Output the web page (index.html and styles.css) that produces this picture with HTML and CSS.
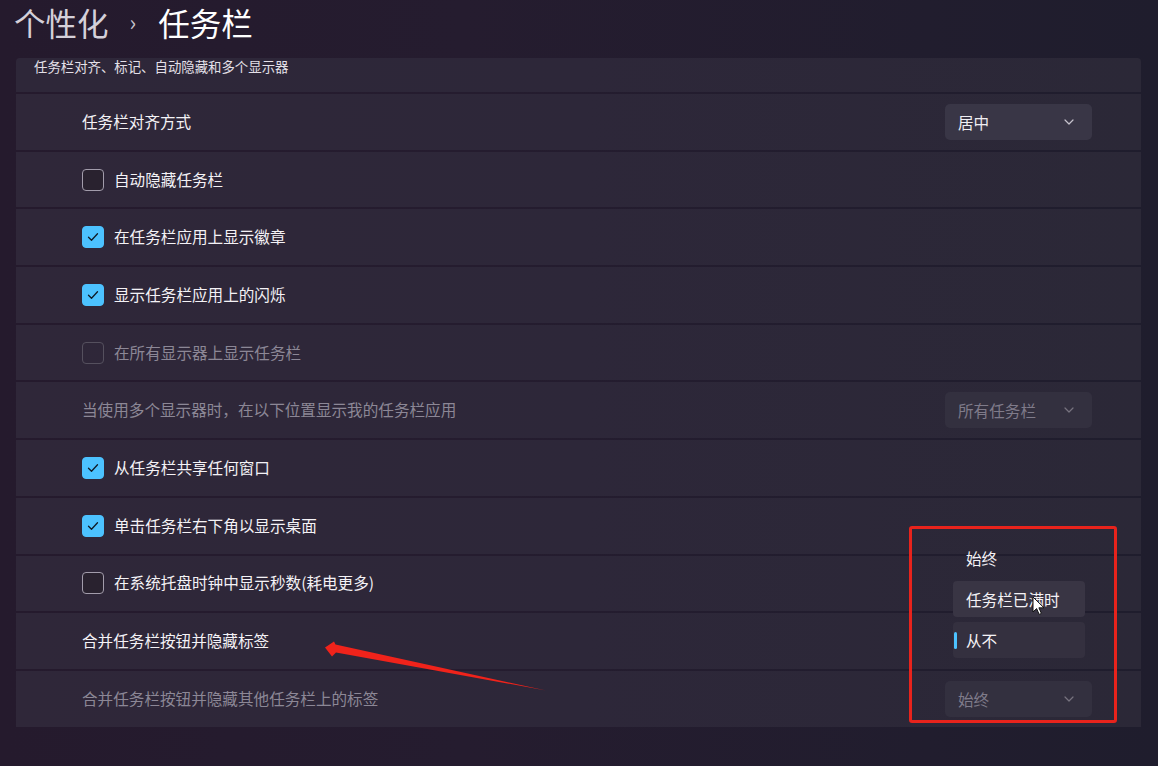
FILE: index.html
```html
<!DOCTYPE html>
<html lang="zh-CN">
<head>
<meta charset="utf-8">
<title>任务栏</title>
<link rel="stylesheet" href="styles.css">
</head>
<body>
<div class="page">
  <h1 class="title"><span class="crumb">个性化</span><span class="sep">›</span><span class="current">任务栏</span></h1>
  <div class="card">
    <div class="card-head">任务栏对齐、标记、自动隐藏和多个显示器</div>
    <div class="row">
      <span class="label">任务栏对齐方式</span>
      <div class="select"><span>居中</span><svg class="chev" width="10" height="6" viewBox="0 0 10 6"><path d="M1 1l4 4 4-4" fill="none" stroke="currentColor" stroke-width="1.2" stroke-linecap="round" stroke-linejoin="round"/></svg></div>
    </div>
    <div class="row">
      <span class="cb"></span><span class="label">自动隐藏任务栏</span>
    </div>
    <div class="row">
      <span class="cb on"><svg width="12" height="10" viewBox="0 0 12 10"><path d="M1.5 5.2l3 3 6-6.4" fill="none" stroke="currentColor" stroke-width="1.3" stroke-linecap="round" stroke-linejoin="round"/></svg></span><span class="label">在任务栏应用上显示徽章</span>
    </div>
    <div class="row">
      <span class="cb on"><svg width="12" height="10" viewBox="0 0 12 10"><path d="M1.5 5.2l3 3 6-6.4" fill="none" stroke="currentColor" stroke-width="1.3" stroke-linecap="round" stroke-linejoin="round"/></svg></span><span class="label">显示任务栏应用上的闪烁</span>
    </div>
    <div class="row disabled">
      <span class="cb"></span><span class="label">在所有显示器上显示任务栏</span>
    </div>
    <div class="row disabled">
      <span class="label">当使用多个显示器时，在以下位置显示我的任务栏应用</span>
      <div class="select"><span>所有任务栏</span><svg class="chev" width="10" height="6" viewBox="0 0 10 6"><path d="M1 1l4 4 4-4" fill="none" stroke="currentColor" stroke-width="1.2" stroke-linecap="round" stroke-linejoin="round"/></svg></div>
    </div>
    <div class="row">
      <span class="cb on"><svg width="12" height="10" viewBox="0 0 12 10"><path d="M1.5 5.2l3 3 6-6.4" fill="none" stroke="currentColor" stroke-width="1.3" stroke-linecap="round" stroke-linejoin="round"/></svg></span><span class="label">从任务栏共享任何窗口</span>
    </div>
    <div class="row">
      <span class="cb on"><svg width="12" height="10" viewBox="0 0 12 10"><path d="M1.5 5.2l3 3 6-6.4" fill="none" stroke="currentColor" stroke-width="1.3" stroke-linecap="round" stroke-linejoin="round"/></svg></span><span class="label">单击任务栏右下角以显示桌面</span>
    </div>
    <div class="row">
      <span class="cb"></span><span class="label">在系统托盘时钟中显示秒数(耗电更多)</span>
    </div>
    <div class="row">
      <span class="label">合并任务栏按钮并隐藏标签</span>
    </div>
    <div class="row disabled">
      <span class="label">合并任务栏按钮并隐藏其他任务栏上的标签</span>
      <div class="select"><span>始终</span><svg class="chev" width="10" height="6" viewBox="0 0 10 6"><path d="M1 1l4 4 4-4" fill="none" stroke="currentColor" stroke-width="1.2" stroke-linecap="round" stroke-linejoin="round"/></svg></div>
    </div>

    <div class="menu">
      <div class="item">始终</div>
      <div class="item hover">任务栏已满时</div>
      <div class="item selected">从不</div>
    </div>
  </div>
</div>

<div class="highlight"></div>
<svg class="annot" width="1158" height="766" viewBox="0 0 1158 766">
  <polygon points="325,647.5 334,641.5 335.5,644.5 546,690.5 336,652.5 332,656.5" fill="#f0231b"/>
</svg>
<svg class="cursor" width="14" height="20" viewBox="0 0 14 20">
  <path d="M1 1v15l3.6-3.4 2.6 5.8 2.2-1-2.5-5.6H12z" fill="#ffffff" stroke="#111" stroke-width="1"/>
</svg>
</body>
</html>
```
FILE: styles.css
```css
* { box-sizing: border-box; }
html, body { margin: 0; padding: 0; }
body {
  width: 1158px;
  height: 766px;
  overflow: hidden;
  background: linear-gradient(90deg, #251a2d 0%, #251c2f 40%, #211d2e 80%, #1f1d2d 100%);
  font-family: "Noto Sans CJK SC", "Noto Sans", sans-serif;
  color: #ffffff;
  position: relative;
}
.page {
  padding: 0 17px 0 16px;
}
.title {
  margin: 0 0 14px -2px;
  font-weight: 400;
  font-size: 31.5px;
  line-height: 44px;
  display: flex;
  align-items: center;
  height: 44px;
}
.crumb { color: #d4d0d9; }
.sep { color: #c8c4ce; font-size: 22px; margin: 0 22px 0 21px; position: relative; top: -1px; }
.current { color: #ffffff; }

.card {
  position: relative;
  width: 1125px;
  display: flex;
  flex-direction: column;
  gap: 2px;
}
.card-head {
  height: 34px;
  background: linear-gradient(90deg, #2e2739 0%, #2d2739 50%, #2b2837 100%);
  border-radius: 4px 4px 0 0;
  font-size: 13.4px;
  color: #e4e0e8;
  padding: 0 0 0 18px;
  line-height: 17px;
}
.row {
  height: 55.7px;
  background: linear-gradient(90deg, #2f2739 0%, #2d2739 50%, #2b2837 100%);
  display: flex;
  align-items: center;
  padding: 0 49px 2px 66px;
  font-size: 15.6px;
  color: #f4f2f6;
  line-height: 20px;
}
.row:last-of-type { border-radius: 0 0 4px 4px; }
.label { flex: 1; white-space: nowrap; }
.cb {
  width: 22px;
  height: 22px;
  border-radius: 4px;
  border: 1px solid #a29cab;
  background: #29222f;
  margin-right: 10px;
  display: flex;
  align-items: center;
  justify-content: center;
  flex: none;
  position: relative;
  top: 1px;
}
.cb.on {
  background: #4cc2ff;
  border-color: #4cc2ff;
  color: #0f1a26;
}
.disabled { color: #8c8796; }
.disabled .cb { border-color: #55505e; background: transparent; }

.select {
  width: 147px;
  height: 36px;
  border-radius: 5px;
  background: #393646;
  display: flex;
  align-items: center;
  justify-content: space-between;
  padding: 0 18px 0 13px;
  color: #f0eef2;
  font-size: 15.6px;
  flex: none;
  position: relative;
  top: 1px;
}
.select .chev { color: #c6c2cc; }
.disabled .select { background: #33303f; color: #7f7b8a; }
.disabled .select .chev { color: #77737f; }

.menu {
  position: absolute;
  left: 937px;
  top: 482px;
  width: 132px;
  display: flex;
  flex-direction: column;
  gap: 5px;
}
.item {
  height: 36px;
  border-radius: 4px;
  display: flex;
  align-items: center;
  padding-left: 13px;
  font-size: 15.6px;
  color: #f4f2f6;
  position: relative;
}
.item.hover { background: #393544; }
.item.selected { background: #34303f; }
.item.selected::before {
  content: "";
  position: absolute;
  left: 1px;
  top: 10px;
  width: 3px;
  height: 17px;
  border-radius: 2px;
  background: #4cc2ff;
}

.highlight {
  position: absolute;
  left: 909px;
  top: 526px;
  width: 208px;
  height: 197px;
  border: 3px solid #e8231c;
  border-radius: 3px;
}
.annot {
  position: absolute;
  left: 0;
  top: 0;
  pointer-events: none;
}
.cursor {
  position: absolute;
  left: 1032px;
  top: 596px;
}
```
